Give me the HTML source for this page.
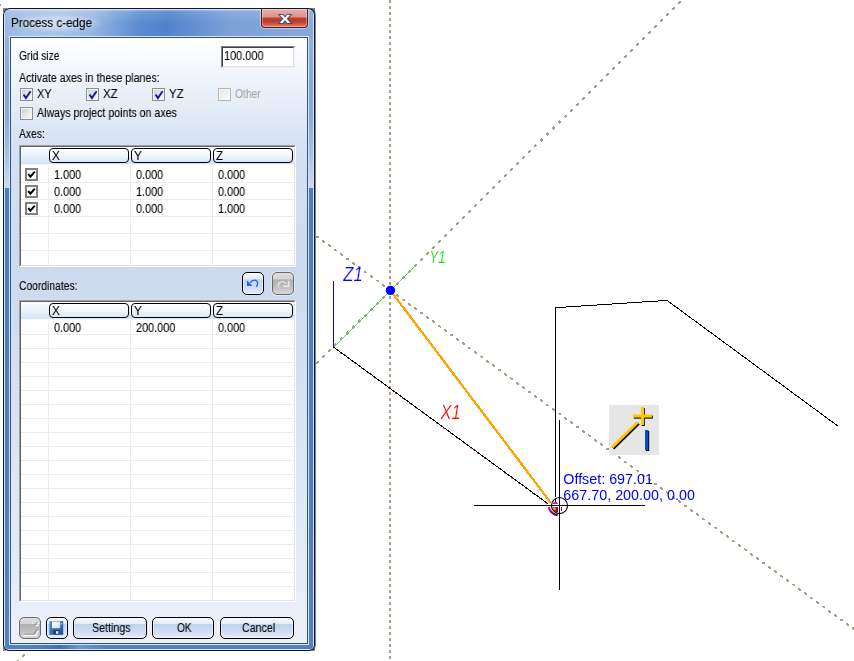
<!DOCTYPE html>
<html><head><meta charset="utf-8"><title>Process c-edge</title>
<style>
html,body{margin:0;padding:0;background:#fff;}
body{width:854px;height:661px;position:relative;overflow:hidden;font-family:'Liberation Sans',sans-serif;}
.a{position:absolute;box-sizing:border-box;}
.t{position:absolute;white-space:nowrap;transform-origin:0 0;display:block;will-change:transform;-webkit-text-stroke:0.1px currentColor;}
#win{left:3px;top:8px;width:312px;height:643px;border-radius:7px 7px 6px 6px;background:#10192a;box-shadow:1px 0 0 rgba(20,30,45,.55);}
#hl{left:1px;top:1px;right:1px;bottom:1px;border-radius:6px 6px 5px 5px;background:#d6e4f6;}
#frame{left:1px;top:1px;right:1px;bottom:1px;border-radius:5px 5px 4px 4px;overflow:hidden;background:#4b7dc8;}
#client{left:10px;top:37px;width:298px;height:607px;border:1px solid #33507c;
 background:linear-gradient(to bottom,#ffffff 0px,#f4f7fc 30px,#d5e2f3 105px,#ccdaef 230px,#d8e3f3 380px,#e9eef8 570px,#ebf0f9 606px);}
.btn{border:1px solid #000;border-radius:5px;background:linear-gradient(to bottom,#f6fafe 0%,#e2ecf9 29%,#bfd2ed 32%,#ccdcf2 65%,#e4edf9 100%);box-shadow:inset 0 0 0 1px rgba(255,255,255,.45);}
.gbtn{border:1px solid #6a6a6a;box-shadow:0 0 0 1px rgba(255,255,255,.35);border-radius:5px;background:linear-gradient(to bottom,#dedede 0%,#d4d4d4 29%,#b0b0b0 32%,#bebebe 65%,#d8d8d8 100%);}
.hdr{border:1px solid #000;border-radius:4px;background:linear-gradient(to bottom,#ffffff 0%,#f3f7fc 45%,#dbe6f6 100%);}
.tbl{background:#fff;border-top:1px solid #a0a0a0;border-left:1px solid #a0a0a0;border-right:1px solid #fff;border-bottom:1px solid #fff;}
.tbl2{border-top:1px solid #646464;border-left:1px solid #646464;border-right:1px solid #e3e3e3;border-bottom:1px solid #e3e3e3;}
.hbg{background:linear-gradient(to bottom,#fdfeff 0%,#eaf1fa 50%,#d4e2f4 100%);}
.gl{background:#ececec;}
.cb{width:13px;height:13px;border:1px solid #8e8f8f;background:#f4f4f4;}
.cb i{position:absolute;left:0;top:0;width:11px;height:11px;border:1px solid #f4f4f4;box-sizing:border-box;background:linear-gradient(135deg,#cdd2d9 0%,#e4e6ea 50%,#f6f6f6 100%);display:block;}
.cbc{width:13px;height:13px;border:2px solid #808080;background:#fff;}
</style></head>
<body>
<svg class="a" style="left:0;top:0;will-change:transform" width="854" height="661" viewBox="0 0 854 661">
<g fill="none">
<line x1="333.5" y1="347.2" x2="415.6" y2="265.1" stroke="#00ee00" stroke-width="0.75" shape-rendering="crispEdges"/>
<line x1="333.5" y1="281" x2="333.5" y2="347" stroke="#0000ff" stroke-width="1" shape-rendering="crispEdges"/>
<line x1="333.3" y1="347.4" x2="547.8" y2="504.1" stroke="#ff0000" stroke-width="1.2" stroke-dasharray="1.5 7"/>
</g>
<g fill="none" stroke="#a3a38b" stroke-width="2" stroke-dasharray="3 3">
<line x1="390" y1="291" x2="390" y2="-3"/>
<line x1="390" y1="290" x2="390" y2="664"/>
</g>
<g fill="none" stroke="#a3a38b" stroke-width="2.2" stroke-dasharray="3.4 5.064" stroke-dashoffset="-0.416" shape-rendering="crispEdges">
<line x1="390" y1="290.70" x2="690" y2="-7.79"/>
<line x1="391" y1="289.70" x2="10" y2="668.79"/>
</g>
<g fill="none" stroke="#a3a38b" stroke-width="2.1" stroke-dasharray="3.2 4.232" stroke-dashoffset="-0.258" shape-rendering="crispEdges">
<line x1="390" y1="290.01" x2="860" y2="633.53"/>
<line x1="391" y1="290.74" x2="-8" y2="-0.89"/>
</g>
<rect x="2" y="6.5" width="7" height="6" fill="#fff"/>
<rect x="3" y="647" width="3" height="4" fill="#8e8e8e"/>
<rect x="312" y="648" width="3" height="3" fill="#8e8e8e"/>
<rect x="311" y="8" width="4" height="4" fill="#77808c"/>
<rect x="3" y="8" width="4" height="4" fill="#77808c"/>
<g fill="none" stroke="#000" stroke-width="1" shape-rendering="crispEdges">
<line x1="333.3" y1="346.9" x2="547.8" y2="503.6"/>
<polyline points="555.5,497 555.5,307.7 667,300.4 838.5,426.5"/>
<line x1="555.5" y1="498.5" x2="555.5" y2="501.5"/>
</g>
<line x1="390.4" y1="290.4" x2="550.8" y2="502.8" stroke="#ffa400" stroke-width="2.3" shape-rendering="crispEdges"/>
<circle cx="390.4" cy="290.4" r="4.7" fill="#0000ff"/>
<!-- snap marker -->
<defs><linearGradient id="mg" x1="0" y1="0" x2="1" y2="1"><stop offset="0" stop-color="#d8159a"/><stop offset="1" stop-color="#4a0830"/></linearGradient></defs>
<path d="M548.9 507 Q549.9 513.6 557.6 515.2" fill="none" stroke="url(#mg)" stroke-width="2.3"/>
<path d="M552.6 507 L558 507 L558 512.4 Q553.2 511.8 552.6 507 Z" fill="url(#mg)"/>
<path d="M552.2 503.9 L558 503.9 L557 501.9 L554.6 501.9 Q553 502.5 552.2 503.9 Z" fill="#e0109a"/>
<circle cx="554.6" cy="508.7" r="1.4" fill="#ffa400"/>
<g fill="none" stroke="#000" stroke-width="1" shape-rendering="crispEdges">
<line x1="474" y1="505.5" x2="645" y2="505.5"/>
<line x1="559.5" y1="420" x2="559.5" y2="590"/>
</g>
<circle cx="559.5" cy="505.5" r="8" fill="none" stroke="#000" stroke-width="1.1"/>
<line x1="561.5" y1="507" x2="561.5" y2="511" stroke="#7a0a4a" stroke-width="1"/>
<!-- cursor icon -->
<rect x="609" y="405" width="50" height="50" fill="#e6e6e6"/>
<g stroke-linecap="butt">
<line x1="613.2" y1="448.4" x2="638.6" y2="423.4" stroke="#000" stroke-width="3"/>
<line x1="612.2" y1="447.2" x2="637.6" y2="422.2" stroke="#ffc800" stroke-width="3"/>
<rect x="641.8" y="408" width="3" height="18" fill="#000"/>
<rect x="633.8" y="415.6" width="19" height="3" fill="#000"/>
<rect x="641" y="407" width="3" height="18" fill="#ffc800"/>
<rect x="633" y="414.6" width="19" height="3" fill="#ffc800"/>
<rect x="645.8" y="431" width="3.4" height="20" fill="#000"/>
<rect x="645" y="430" width="3.4" height="20" fill="#0a4cc8"/>
</g>
<g font-family="'Liberation Sans', sans-serif" font-style="italic" stroke="#fff" stroke-width="0.2">
<text x="343.3" y="280.9" font-size="19.6" fill="#0000ff" textLength="19.5" lengthAdjust="spacingAndGlyphs">Z1</text>
<text x="429.6" y="262.6" font-size="16.6" fill="#00e800" textLength="16" lengthAdjust="spacingAndGlyphs">Y1</text>
<text x="440.6" y="418.9" font-size="19.6" fill="#ff0000" textLength="20" lengthAdjust="spacingAndGlyphs">X1</text>
</g>
<g font-family="'Liberation Sans', sans-serif" font-size="14.3" fill="#0000ff">
<text x="563.3" y="484.4" textLength="89.6" lengthAdjust="spacingAndGlyphs">Offset: 697.01</text>
<text x="563.3" y="500.4" textLength="131.6" lengthAdjust="spacingAndGlyphs">667.70, 200.00, 0.00</text>
</g>
</svg>
<div id="win" class="a"><div id="hl" class="a"><div id="frame" class="a">
<div class="a" style="left:0;top:0;width:4px;height:639px;background:linear-gradient(to bottom,#98b6e2 0px,#93b3e0 27px,#8cade0 45px,#84a8db 75px,#86a9db 105px,#a6c1e6 145px,#cbdcf2 178px,#4a7cc8 178px,#4c7ec9 400px,#4f81c9 639px);"></div>
<div class="a" style="left:304px;top:0;width:4px;height:639px;background:linear-gradient(to bottom,#98b6e2 0px,#93b3e0 27px,#8cade0 45px,#84a8db 75px,#86a9db 105px,#a6c1e6 145px,#cbdcf2 178px,#4a7cc8 178px,#4c7ec9 400px,#4f81c9 639px);"></div>
<div class="a" style="left:0;top:635px;width:308px;height:4px;background:linear-gradient(to right,#4f81c9 0px,#4f81c9 30px,#3f6fba 55px,#6a98d8 75px,#4f81c9 100px,#4f81c9 308px);"></div>
<div class="a" style="left:0;top:0;width:308px;height:28px;background:linear-gradient(100deg,#98b6e2 0px,#a6c0e6 22px,#acc4e8 55px,#9ab8e3 88px,#7ba3da 110px,#5a8bd1 135px,#4f82cc 162px,#6792d4 195px,#7ba1d8 225px,#86a9dc 308px);"></div>
<div class="a" style="left:0;top:0;width:308px;height:28px;background:linear-gradient(to bottom,rgba(255,255,255,.35) 0px,rgba(255,255,255,.12) 2px,rgba(255,255,255,0) 14px,rgba(255,255,255,.0) 27px);"></div>
</div></div>
<div class="a" style="left:6px;top:28px;width:300px;height:609px;border:1px solid #dbe7f7;"></div>
<span class="t" style="left:5px;top:6px;width:96px;height:18px;background:radial-gradient(ellipse at center,rgba(255,255,255,.5) 0%,rgba(255,255,255,.28) 45%,rgba(255,255,255,0) 72%);"></span>
<span class="t" style="left:8.2px;top:7.73px;font-size:12px;line-height:14px;color:#000;transform:scale(0.9715,1.0);">Process c-edge</span>
<div class="a" style="left:257px;top:1px;width:49px;height:20px;border-radius:0 0 5px 5px;background:rgba(255,255,255,.45);"></div>
<div class="a" style="left:258px;top:1px;width:47px;height:19px;border:1px solid #5a1410;border-top:none;border-radius:0 0 4px 4px;background:linear-gradient(to bottom,#e9b3ae 0px,#dc9088 8px,#c2402f 9px,#bb3826 12px,#cf6450 16px,#dc8a74 18px);box-shadow:inset 0 0 0 1px rgba(255,255,255,.35);"></div>
<svg class="a" style="left:274.4px;top:3.5px" width="16" height="12" viewBox="0 0 16 12"><text x="8" y="10.6" text-anchor="middle" font-family="'Liberation Sans',sans-serif" font-weight="bold" font-size="15" fill="#fff" stroke="#3f4660" stroke-width="1.7" paint-order="stroke" textLength="11" lengthAdjust="spacingAndGlyphs">x</text></svg>
<div id="client" class="a" style="left:7px;top:29px;">
<span class="t" style="left:8.100000000000001px;top:11.03px;font-size:12px;line-height:14px;color:#000;transform:scale(0.8533,1.0);">Grid size</span>
<div class="a " style="left:210px;top:8px;width:74px;height:22px;background:#fff;border-top:1px solid #828282;border-left:1px solid #828282;border-right:1px solid #f0f0f0;border-bottom:1px solid #f0f0f0;"><div class="a" style="left:0;top:0;right:0;bottom:0;border-top:1px solid #3c3c3c;border-left:1px solid #3c3c3c;border-right:1px solid #e3e3e3;border-bottom:1px solid #e3e3e3;"></div></div>
<span class="t" style="left:212.8px;top:11.03px;font-size:12px;line-height:14px;color:#000;transform:scale(0.9126,1.0);">100.000</span>
<span class="t" style="left:7.899999999999999px;top:33.03px;font-size:12px;line-height:14px;color:#000;transform:scale(0.8856,1.0);">Activate axes in these planes:</span>
<div class="a cb" style="left:9px;top:50px;width:13px;height:13px;"><i></i><svg class="a" style="left:0.5px;top:0.5px" width="10" height="10" viewBox="0 0 10 10"><path d="M1.6 4.6 L3.9 8.1 L8.6 1.3" fill="none" stroke="#0c1a9a" stroke-width="1.9" stroke-linejoin="miter"/></svg></div>
<span class="t" style="left:25.6px;top:49.03px;font-size:12px;line-height:14px;color:#000;transform:scale(0.9116,1.0);">XY</span>
<div class="a cb" style="left:75px;top:50px;width:13px;height:13px;"><i></i><svg class="a" style="left:0.5px;top:0.5px" width="10" height="10" viewBox="0 0 10 10"><path d="M1.6 4.6 L3.9 8.1 L8.6 1.3" fill="none" stroke="#0c1a9a" stroke-width="1.9" stroke-linejoin="miter"/></svg></div>
<span class="t" style="left:91.6px;top:49.03px;font-size:12px;line-height:14px;color:#000;transform:scale(0.9515,1.0);">XZ</span>
<div class="a cb" style="left:141px;top:50px;width:13px;height:13px;"><i></i><svg class="a" style="left:0.5px;top:0.5px" width="10" height="10" viewBox="0 0 10 10"><path d="M1.6 4.6 L3.9 8.1 L8.6 1.3" fill="none" stroke="#0c1a9a" stroke-width="1.9" stroke-linejoin="miter"/></svg></div>
<span class="t" style="left:157.6px;top:49.03px;font-size:12px;line-height:14px;color:#000;transform:scale(0.9515,1.0);">YZ</span>
<div class="a cb" style="left:207px;top:50px;width:13px;height:13px;border-color:#b8b8b8;background:#fafafa;"><i style="background:linear-gradient(135deg,#e6e6e6,#fbfbfb)"></i></div>
<span class="t" style="left:224.2px;top:49.03px;font-size:12px;line-height:14px;color:#a5a5a5;transform:scale(0.8596,1.0);">Other</span>
<div class="a cb" style="left:9px;top:69px;width:13px;height:13px;"><i></i></div>
<span class="t" style="left:26px;top:68.03px;font-size:12px;line-height:14px;color:#000;transform:scale(0.8843,1.0);">Always project points on axes</span>
<span class="t" style="left:8.100000000000001px;top:89.03px;font-size:12px;line-height:14px;color:#000;transform:scale(0.8596,1.0);">Axes:</span>
<div class="a tbl" style="left:8px;top:107px;width:277px;height:122px;"><div class="a tbl2" style="left:0;top:0;right:0;bottom:0;"></div><div class="a" style="left:1px;top:1px;width:273px;height:118px;overflow:hidden;"><div class="a hbg" style="left:0;top:0;width:273px;height:17px;"></div><div class="a gl" style="left:27px;top:17px;width:1px;height:101px;"></div><div class="a gl" style="left:109px;top:17px;width:1px;height:101px;"></div><div class="a gl" style="left:191px;top:17px;width:1px;height:101px;"></div><div class="a" style="left:0;top:17px;width:273px;height:1px;background:#f4f6f9;"></div><div class="a gl" style="left:0;top:35px;width:273px;height:1px;"></div><div class="a gl" style="left:0;top:52px;width:273px;height:1px;"></div><div class="a gl" style="left:0;top:69px;width:273px;height:1px;"></div><div class="a gl" style="left:0;top:86px;width:273px;height:1px;"></div><div class="a gl" style="left:0;top:103px;width:273px;height:1px;"></div><div class="a hdr" style="left:28px;top:1px;width:80px;height:15px;"></div><span class="t" style="left:30.6px;top:2.03px;font-size:12px;line-height:14px;color:#000;transform:scale(0.9731,1.0);">X</span><div class="a hdr" style="left:110px;top:1px;width:80px;height:15px;"></div><span class="t" style="left:112.6px;top:2.03px;font-size:12px;line-height:14px;color:#000;transform:scale(0.9731,1.0);">Y</span><div class="a hdr" style="left:192px;top:1px;width:80px;height:15px;"></div><span class="t" style="left:194.6px;top:2.03px;font-size:12px;line-height:14px;color:#000;transform:scale(0.9532,1.0);">Z</span></div></div>
<div class="a cbc" style="left:14px;top:130px;width:13px;height:13px;"><svg class="a" style="left:0;top:0" width="9" height="9" viewBox="0 0 9 9"><path d="M1.2 4 L3.4 6.6 L7.8 1.6" fill="none" stroke="#000" stroke-width="2"/></svg></div>
<span class="t" style="left:43.4px;top:130.03px;font-size:12px;line-height:14px;color:#000;transform:scale(0.9057,1.0);">1.000</span>
<span class="t" style="left:125.4px;top:130.03px;font-size:12px;line-height:14px;color:#000;transform:scale(0.9057,1.0);">0.000</span>
<span class="t" style="left:207.4px;top:130.03px;font-size:12px;line-height:14px;color:#000;transform:scale(0.9057,1.0);">0.000</span>
<div class="a cbc" style="left:14px;top:147px;width:13px;height:13px;"><svg class="a" style="left:0;top:0" width="9" height="9" viewBox="0 0 9 9"><path d="M1.2 4 L3.4 6.6 L7.8 1.6" fill="none" stroke="#000" stroke-width="2"/></svg></div>
<span class="t" style="left:43.4px;top:147.03px;font-size:12px;line-height:14px;color:#000;transform:scale(0.9057,1.0);">0.000</span>
<span class="t" style="left:125.4px;top:147.03px;font-size:12px;line-height:14px;color:#000;transform:scale(0.9057,1.0);">1.000</span>
<span class="t" style="left:207.4px;top:147.03px;font-size:12px;line-height:14px;color:#000;transform:scale(0.9057,1.0);">0.000</span>
<div class="a cbc" style="left:14px;top:164px;width:13px;height:13px;"><svg class="a" style="left:0;top:0" width="9" height="9" viewBox="0 0 9 9"><path d="M1.2 4 L3.4 6.6 L7.8 1.6" fill="none" stroke="#000" stroke-width="2"/></svg></div>
<span class="t" style="left:43.4px;top:164.03px;font-size:12px;line-height:14px;color:#000;transform:scale(0.9057,1.0);">0.000</span>
<span class="t" style="left:125.4px;top:164.03px;font-size:12px;line-height:14px;color:#000;transform:scale(0.9057,1.0);">0.000</span>
<span class="t" style="left:207.4px;top:164.03px;font-size:12px;line-height:14px;color:#000;transform:scale(0.9057,1.0);">1.000</span>
<span class="t" style="left:8.0px;top:241.03px;font-size:12px;line-height:14px;color:#000;transform:scale(0.8582,1.0);">Coordinates:</span>
<div class="a btn" style="left:231px;top:234px;width:22px;height:23px;"><svg class="a" style="left:0;top:0" width="20" height="21" viewBox="0 0 20 21"><path d="M4 7.6 L4 13 L9.4 13 Z" fill="#2a5cff"/><path d="M7.2 9.8 C9.2 6.4 14.4 6.2 14.6 10.2 C14.6 11.6 14 12.8 13.4 13.8" fill="none" stroke="#2a5cff" stroke-width="1.3"/></svg></div>
<div class="a gbtn" style="left:261px;top:234px;width:22px;height:23px;"><svg class="a" style="left:0;top:0" width="20" height="21" viewBox="0 0 20 21"><path d="M5.6 14.4 C4.4 9.4 9 6.8 13 10.2" fill="none" stroke="#e6e6e6" stroke-width="1.3"/><path d="M15.6 8 L15.6 13.2 L10.4 13.2" fill="none" stroke="#ececec" stroke-width="1.6"/></svg></div>
<div class="a tbl" style="left:8px;top:262px;width:277px;height:302px;"><div class="a tbl2" style="left:0;top:0;right:0;bottom:0;"></div><div class="a" style="left:1px;top:1px;width:273px;height:298px;overflow:hidden;"><div class="a hbg" style="left:0;top:0;width:273px;height:17px;"></div><div class="a gl" style="left:27px;top:17px;width:1px;height:281px;"></div><div class="a gl" style="left:109px;top:17px;width:1px;height:281px;"></div><div class="a gl" style="left:191px;top:17px;width:1px;height:281px;"></div><div class="a" style="left:0;top:17px;width:273px;height:1px;background:#f4f6f9;"></div><div class="a gl" style="left:0;top:32px;width:273px;height:1px;"></div><div class="a gl" style="left:0;top:46px;width:273px;height:1px;"></div><div class="a gl" style="left:0;top:60px;width:273px;height:1px;"></div><div class="a gl" style="left:0;top:74px;width:273px;height:1px;"></div><div class="a gl" style="left:0;top:88px;width:273px;height:1px;"></div><div class="a gl" style="left:0;top:102px;width:273px;height:1px;"></div><div class="a gl" style="left:0;top:116px;width:273px;height:1px;"></div><div class="a gl" style="left:0;top:130px;width:273px;height:1px;"></div><div class="a gl" style="left:0;top:144px;width:273px;height:1px;"></div><div class="a gl" style="left:0;top:158px;width:273px;height:1px;"></div><div class="a gl" style="left:0;top:172px;width:273px;height:1px;"></div><div class="a gl" style="left:0;top:186px;width:273px;height:1px;"></div><div class="a gl" style="left:0;top:200px;width:273px;height:1px;"></div><div class="a gl" style="left:0;top:214px;width:273px;height:1px;"></div><div class="a gl" style="left:0;top:228px;width:273px;height:1px;"></div><div class="a gl" style="left:0;top:242px;width:273px;height:1px;"></div><div class="a gl" style="left:0;top:256px;width:273px;height:1px;"></div><div class="a gl" style="left:0;top:270px;width:273px;height:1px;"></div><div class="a gl" style="left:0;top:284px;width:273px;height:1px;"></div><div class="a hdr" style="left:28px;top:1px;width:80px;height:15px;"></div><span class="t" style="left:30.6px;top:2.03px;font-size:12px;line-height:14px;color:#000;transform:scale(0.9731,1.0);">X</span><div class="a hdr" style="left:110px;top:1px;width:80px;height:15px;"></div><span class="t" style="left:112.6px;top:2.03px;font-size:12px;line-height:14px;color:#000;transform:scale(0.9731,1.0);">Y</span><div class="a hdr" style="left:192px;top:1px;width:80px;height:15px;"></div><span class="t" style="left:194.6px;top:2.03px;font-size:12px;line-height:14px;color:#000;transform:scale(0.9532,1.0);">Z</span></div></div>
<span class="t" style="left:43.4px;top:283.03px;font-size:12px;line-height:14px;color:#000;transform:scale(0.9057,1.0);">0.000</span>
<span class="t" style="left:125.4px;top:283.03px;font-size:12px;line-height:14px;color:#000;transform:scale(0.908,1.0);">200.000</span>
<span class="t" style="left:207.4px;top:283.03px;font-size:12px;line-height:14px;color:#000;transform:scale(0.9057,1.0);">0.000</span>
<div class="a gbtn" style="left:8px;top:579px;width:22px;height:22px;"><svg class="a" style="left:0;top:0" width="20" height="20" viewBox="0 0 20 20"><path d="M4.4 16.4 L13.6 16.4 L17.4 11.2" fill="none" stroke="#8e8e8e" stroke-width="1.1"/><path d="M3.4 17.5 L15.9 17.5 L18.2 12.6" fill="none" stroke="#fbfbfb" stroke-width="1.3"/><path d="M15 6.8 L17.6 4.2" fill="none" stroke="#8e8e8e" stroke-width="1.1"/><path d="M18 4.6 L18 7.7 L15.8 7.7" fill="none" stroke="#fbfbfb" stroke-width="1.2"/><rect x="11.7" y="4.4" width="1.3" height="1.3" fill="#fbfbfb"/></svg></div>
<div class="a btn" style="left:35px;top:579px;width:22px;height:22px;"><svg class="a" style="left:0;top:0" width="20" height="20" viewBox="0 0 20 20"><defs><linearGradient id="fg" x1="0" y1="0" x2="1" y2="1"><stop offset="0" stop-color="#4f8fd8"/><stop offset="1" stop-color="#174f9c"/></linearGradient><linearGradient id="fw" x1="0" y1="0" x2="1" y2="1"><stop offset="0" stop-color="#ffffff"/><stop offset="1" stop-color="#d6dde6"/></linearGradient></defs><rect x="2.4" y="3.2" width="13.8" height="13.6" fill="url(#fg)"/><rect x="5" y="3.6" width="8.2" height="6.6" fill="url(#fw)"/><rect x="6.6" y="12.4" width="5.6" height="4" fill="#1c2c48"/><rect x="8.8" y="13.2" width="2.6" height="2.6" fill="#e8eef6"/><rect x="14.2" y="5" width="1" height="1.4" fill="#cfe0f6"/></svg></div>
<div class="a btn" style="left:62px;top:579px;width:74px;height:22px;"></div>
<div class="a btn" style="left:141px;top:579px;width:62px;height:22px;"></div>
<div class="a btn" style="left:209px;top:579px;width:74px;height:22px;"></div>
<span class="t" style="left:81.2px;top:583.03px;font-size:12px;line-height:14px;color:#000;transform:scale(0.8902,1.0);">Settings</span>
<span class="t" style="left:166.4px;top:583.03px;font-size:12px;line-height:14px;color:#000;transform:scale(0.8418,1.0);">OK</span>
<span class="t" style="left:231.2px;top:583.03px;font-size:12px;line-height:14px;color:#000;transform:scale(0.8887,1.0);">Cancel</span>
</div>
</div>
</body></html>
